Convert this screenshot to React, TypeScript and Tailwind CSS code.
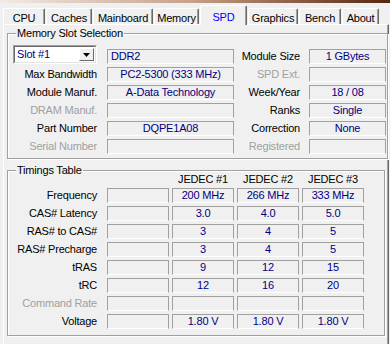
import type { ReactNode } from "react";

function cx(...c: Array<string | false | undefined | null>) {
  return c.filter(Boolean).join(" ");
}

const TABS = [
  { label: "CPU", w: "w-[42px]" },
  { label: "Caches", w: "w-[46px]" },
  { label: "Mainboard", w: "w-[60px]" },
  { label: "Memory", w: "w-[45px]" },
  { label: "SPD", w: "w-[47px]", active: true },
  { label: "Graphics", w: "w-[50px]" },
  { label: "Bench", w: "w-[42px]" },
  { label: "About", w: "w-[37px]" },
];

export default function App() {
  return (
    <div className="w-[390px] h-[344px] overflow-hidden bg-[#f0f0f0] flex flex-col font-['Liberation_Sans',Arial,sans-serif] text-[11px] tracking-[-0.2px] text-black">
      {/* desktop strip behind the window */}
      <div className="h-[3px] shrink-0 bg-linear-to-r from-[#f3ebe6] via-[#c69f87] to-[#55260f]" />

      {/* Tabs */}
      <div className="h-[21px] shrink-0 flex items-end gap-px pl-[3px]">
        {TABS.map((t) => (
          <Tab key={t.label} label={t.label} w={t.w} active={t.active} />
        ))}
      </div>

      {/* Tab panel */}
      <div className="flex-1 ml-[3px] w-[386px] border-l border-t border-white border-r border-r-[#696969] shadow-[inset_-1px_0_0_#a0a0a0] px-[3px]">
        <Group title="Memory Slot Selection" className="mt-[2px] pt-[5px] pb-[4px]">
          {/* row 1 */}
          <div className="flex items-end h-[19px]">
            <div className="w-[84px] h-[19px] bg-white border border-[#a0a0a0] border-r-white border-b-white">
              <div className="h-full flex items-center border border-[#696969] border-r-[#e3e3e3] border-b-[#e3e3e3] pl-[2px] pr-px">
                <span className="flex-1 text-[#000080]">Slot #1</span>
                <div className="w-[15px] h-[13px] bg-[#f0f0f0] border border-white border-r-[#696969] border-b-[#696969] flex items-center justify-center">
                  <svg width="7" height="4" viewBox="0 0 7 4">
                    <path d="M0 0h7L3.5 4z" fill="#000" />
                  </svg>
                </div>
              </div>
            </div>
            <Field className="ml-[10px] w-[127px] justify-start pl-[3px]">DDR2</Field>
            <Label className="w-[66px]">Module Size</Label>
            <Field className="ml-[9px] w-[77px]">1 GBytes</Field>
          </div>
          <InfoRow label="Max Bandwidth" value="PC2-5300 (333 MHz)" label2="SPD Ext." dim2 />
          <InfoRow label="Module Manuf." value="A-Data Technology" label2="Week/Year" value2="18 / 08" />
          <InfoRow label="DRAM Manuf." dim label2="Ranks" value2="Single" />
          <InfoRow label="Part Number" value="DQPE1A08" label2="Correction" value2="None" />
          <InfoRow label="Serial Number" dim label2="Registered" dim2 />
        </Group>

        <Group title="Timings Table" className="mt-[5px] pt-0 pb-[6px]">
          <div className="-mt-[4px] h-[13px] flex items-center">
            <div className="w-[84px]" />
            <div className="ml-[10px] w-[62px]" />
            {["JEDEC #1", "JEDEC #2", "JEDEC #3"].map((h) => (
              <div key={h} className="ml-[3px] w-[62px] text-center">
                {h}
              </div>
            ))}
          </div>
          <TimingRow label="Frequency" values={["200 MHz", "266 MHz", "333 MHz"]} first />
          <TimingRow label="CAS# Latency" values={["3.0", "4.0", "5.0"]} />
          <TimingRow label="RAS# to CAS#" values={["3", "4", "5"]} />
          <TimingRow label="RAS# Precharge" values={["3", "4", "5"]} />
          <TimingRow label="tRAS" values={["9", "12", "15"]} />
          <TimingRow label="tRC" values={["12", "16", "20"]} />
          <TimingRow label="Command Rate" values={["", "", ""]} dim />
          <TimingRow label="Voltage" values={["1.80 V", "1.80 V", "1.80 V"]} />
        </Group>
      </div>
    </div>
  );
}

function Tab({ label, w, active }: { label: string; w: string; active?: boolean }) {
  return (
    <div
      className={cx(
        w,
        "flex justify-center rounded-t-[2px] border-l border-t border-white border-r border-r-[#696969] shadow-[inset_-1px_0_0_#a0a0a0] bg-[#f0f0f0]",
        active ? "relative z-10 h-[20px] -mb-px pt-[3px] text-[#0000ff]" : "h-[16px] pt-[1px]"
      )}
    >
      {label}
    </div>
  );
}

function Group({ title, className, children }: { title: string; className?: string; children: ReactNode }) {
  return (
    <fieldset
      className={cx(
        "border border-[#a0a0a0] shadow-[inset_1px_1px_0_#fff,1px_1px_0_#fff] pl-[5px] pr-px",
        className
      )}
    >
      <legend className="ml-[3px] px-[1px] h-[13px] leading-[13px] bg-[#f0f0f0]">{title}</legend>
      {children}
    </fieldset>
  );
}

function Label({ children, dim, className }: { children: ReactNode; dim?: boolean; className?: string }) {
  return (
    <div className={cx("text-right whitespace-nowrap shrink-0", dim ? "text-[#a0a0a0]" : "text-black", className)}>
      {children}
    </div>
  );
}

function Field({ children, className }: { children?: ReactNode; className?: string }) {
  return (
    <div
      className={cx(
        "h-[15px] shrink-0 flex items-center justify-center whitespace-nowrap overflow-hidden text-[#000080] border border-[#a0a0a0] border-b-white",
        className
      )}
    >
      {children}
    </div>
  );
}

function InfoRow({
  label,
  value,
  dim,
  label2,
  value2,
  dim2,
}: {
  label: string;
  value?: string;
  dim?: boolean;
  label2: string;
  value2?: string;
  dim2?: boolean;
}) {
  return (
    <div className="mt-[3px] flex items-center h-[15px]">
      <Label dim={dim} className="w-[84px]">
        {label}
      </Label>
      <Field className="ml-[10px] w-[127px]">{value}</Field>
      <Label dim={dim2} className="w-[66px]">
        {label2}
      </Label>
      <Field className="ml-[9px] w-[77px]">{value2}</Field>
    </div>
  );
}

function TimingRow({ label, values, dim, first }: { label: string; values: string[]; dim?: boolean; first?: boolean }) {
  return (
    <div className={cx("flex items-center h-[15px]", first ? "mt-[2px]" : "mt-[3px]")}>
      <Label dim={dim} className="w-[84px]">
        {label}
      </Label>
      <Field className="ml-[10px] w-[62px]" />
      {values.map((v, i) => (
        <Field key={i} className="ml-[3px] w-[62px]">
          {v}
        </Field>
      ))}
    </div>
  );
}
